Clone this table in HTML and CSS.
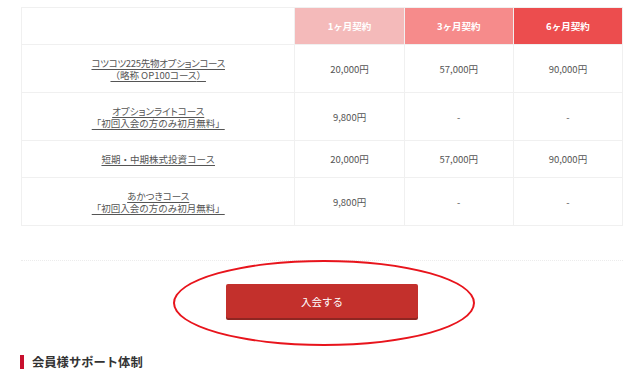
FILE: index.html
```html
<!DOCTYPE html>
<html lang="ja">
<head>
<meta charset="utf-8">
<title>料金表</title>
<link rel="stylesheet" href="styles.css">
</head>
<body>
<div class="page">
  <table class="price-table">
    <colgroup>
      <col class="col-name">
      <col class="col-price">
      <col class="col-price">
      <col class="col-price">
    </colgroup>
    <thead>
      <tr>
        <th class="th-blank"></th>
        <th class="th-1">1ヶ月契約</th>
        <th class="th-3">3ヶ月契約</th>
        <th class="th-6">6ヶ月契約</th>
      </tr>
    </thead>
    <tbody>
      <tr>
        <td><a class="course" href="#"><span class="prop tight">コツコツ225先物オプションコース</span><br>（略称 OP100<span class="prop">コース</span>）</a></td>
        <td>20,000円</td>
        <td>57,000円</td>
        <td>90,000円</td>
      </tr>
      <tr>
        <td><a class="course" href="#"><span class="prop">オプションライトコース</span><br>「初回入会の方のみ初月無料」</a></td>
        <td>9,800円</td>
        <td>-</td>
        <td>-</td>
      </tr>
      <tr class="single">
        <td><a class="course" href="#">短期・中期株式投資コース</a></td>
        <td>20,000円</td>
        <td>57,000円</td>
        <td>90,000円</td>
      </tr>
      <tr>
        <td><a class="course" href="#"><span class="prop">あかつきコース</span><br>「初回入会の方のみ初月無料」</a></td>
        <td>9,800円</td>
        <td>-</td>
        <td>-</td>
      </tr>
    </tbody>
  </table>

  <hr class="divider">

  <div class="cta">
    <div class="cta-wrap">
      <a class="join-btn" href="#">入会する</a>
      <span class="mark"></span>
    </div>
  </div>

  <h2 class="section-title">会員様サポート体制</h2>
</div>
</body>
</html>
```

FILE: styles.css
```css
html, body {
  margin: 0;
  padding: 0;
  background: #ffffff;
}

body {
  font-family: "Noto Sans CJK JP", "Noto Sans", sans-serif;
  color: #555555;
  overflow: hidden;
}

.page {
  padding: 7px 18px 0 21px;
}

.price-table {
  width: 602px;
  border-collapse: collapse;
  table-layout: fixed;
  font-size: 9.5px;
  line-height: 12px;
}

.col-name { width: 273px; }
.col-price { width: 109px; }

.price-table th,
.price-table td {
  border: 1px solid #f0f0f0;
  padding: 0 4px;
  text-align: center;
  vertical-align: middle;
  font-weight: normal;
}

.price-table thead tr { height: 37px; }
.price-table tbody tr { height: 48px; }
.price-table tbody tr.single { height: 37px; }

.price-table th {
  color: #ffffff;
  font-weight: bold;
  font-size: 9.5px;
}

.th-blank { background: #ffffff; }
.th-1 { background: #f4baba; }
.th-3 { background: #f68b8b; }
.th-6 { background: #ec4d4e; }

.course {
  display: inline-block;
  line-height: 12px;
  color: #555555;
  text-decoration: underline;
  text-decoration-color: #555555;
  text-underline-offset: 2px;
}

.prop {
  font-feature-settings: "palt";
}

.tight {
  letter-spacing: -0.3px;
}

.divider {
  margin: 34px 0 0 0;
  border: 0;
  border-top: 1px dotted #ececec;
  width: 602px;
  height: 0;
}

.cta {
  display: flex;
  justify-content: center;
  padding-top: 23px;
  padding-right: 1px;
}

.cta-wrap {
  position: relative;
  margin-left: 2px;
}

.join-btn {
  display: flex;
  align-items: center;
  justify-content: center;
  width: 192px;
  height: 34px;
  background: #c3302c;
  color: #ffffff;
  font-size: 10.5px;
  text-decoration: none;
  border-radius: 2px;
  box-shadow: 0 2px 0 #8e2622;
}

.mark {
  position: absolute;
  left: -53px;
  top: -24px;
  width: 298px;
  height: 82px;
  border: 2px solid #e8141c;
  border-radius: 50%;
  pointer-events: none;
}

.section-title {
  margin: 37px 0 0 -1px;
  padding-left: 8px;
  border-left: 4px solid #c8102e;
  font-size: 12.3px;
  line-height: 14px;
  font-weight: bold;
  color: #333333;
}
```
